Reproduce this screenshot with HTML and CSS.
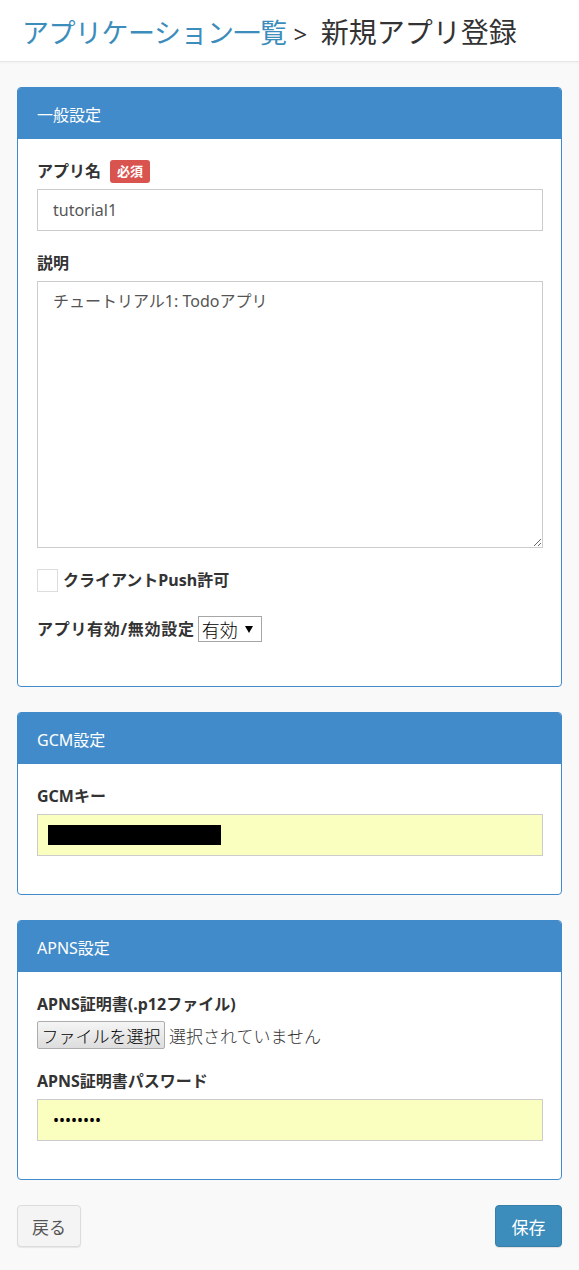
FILE: index.html
```html
<!DOCTYPE html>
<html lang="ja">
<head>
<meta charset="utf-8">
<title>新規アプリ登録</title>
<link rel="stylesheet" href="styles.css">
</head>
<body>
<header class="page-header">
  <h1 class="title"><a class="crumb" href="#">アプリケーション一覧</a><span class="sep">&gt;</span><span class="current">新規アプリ登録</span></h1>
</header>
<main class="content">
  <section class="panel">
    <div class="panel-heading">一般設定</div>
    <div class="panel-body">
      <div class="form-group">
        <label class="label">アプリ名 <span class="badge">必須</span></label>
        <input class="form-control" type="text" value="tutorial1">
      </div>
      <div class="form-group">
        <label class="label">説明</label>
        <textarea class="form-control textarea">チュートリアル1: Todoアプリ</textarea>
      </div>
      <div class="form-group check-row">
        <input class="checkbox" type="checkbox" id="push">
        <label class="label inline" for="push">クライアントPush許可</label>
      </div>
      <div class="form-group select-row last-general">
        <label class="label inline">アプリ有効/無効設定</label>
        <select class="select"><option>有効</option><option>無効</option></select>
      </div>
    </div>
  </section>

  <section class="panel">
    <div class="panel-heading">GCM設定</div>
    <div class="panel-body">
      <div class="form-group">
        <label class="label">GCMキー</label>
        <div class="field-wrap">
          <input class="form-control autofill" type="text" value="">
          <span class="redact"></span>
        </div>
      </div>
    </div>
  </section>

  <section class="panel">
    <div class="panel-heading">APNS設定</div>
    <div class="panel-body">
      <div class="form-group">
        <label class="label">APNS証明書(.p12ファイル)</label>
        <div class="file-row">
          <button class="file-btn" type="button">ファイルを選択</button>
          <span class="file-none">選択されていません</span>
        </div>
      </div>
      <div class="form-group">
        <label class="label">APNS証明書パスワード</label>
        <input class="form-control autofill" type="password" value="password">
      </div>
    </div>
  </section>

  <div class="actions">
    <button class="btn btn-default" type="button">戻る</button>
    <button class="btn btn-primary" type="button">保存</button>
  </div>
</main>
</body>
</html>
```

FILE: styles.css
```css
* { box-sizing: border-box; }

html, body {
  margin: 0;
  padding: 0;
}

body {
  background: #f9f9f9;
  font-family: "Noto Sans", "Noto Sans CJK JP", sans-serif;
  font-size: 16px;
  color: #333;
  width: 579px;
}

.page-header {
  height: 62px;
  background: #fff;
  border-bottom: 1px solid #e6e6e6;
  box-shadow: 0 1px 2px rgba(0,0,0,0.04);
  display: flex;
  align-items: center;
  padding-left: 22px;
}

.title {
  margin: 0;
  font-family: "Noto Sans", "Noto Sans CJK JP", sans-serif;
  font-size: 27px;
  font-weight: 400;
  color: #333;
  line-height: 1;
  letter-spacing: -0.5px;
  white-space: nowrap;
  padding-top: 2px;
}

.crumb {
  color: #3c8dbc;
  text-decoration: none;
}

.sep {
  font-size: 24px;
  margin: 0 14px 0 7px;
  color: #333;
}

.current {
  font-size: 28px;
  letter-spacing: 0;
}

.content {
  padding: 25px 17px 24px 17px;
}

.panel {
  background: #fff;
  border: 1px solid #428bca;
  border-radius: 4px;
  margin-bottom: 25px;
  overflow: hidden;
}

.panel-heading {
  background: #428bca;
  color: #fff;
  height: 51px;
  display: flex;
  align-items: center;
  padding: 0 19px;
  font-size: 16px;
}

.panel-body {
  padding: 20px 18px 18px 19px;
}

.form-group {
  margin-bottom: 20px;
}

.form-group.last-general {
  margin-bottom: 23px;
}

.label {
  display: flex;
  align-items: center;
  gap: 9px;
  font-weight: 700;
  font-size: 16px;
  line-height: 25px;
  height: 25px;
  margin-bottom: 5px;
  color: #333;
}

.label.inline {
  margin-bottom: 0;
  display: inline-flex;
}

.badge {
  display: inline-block;
  background: #d9534f;
  color: #fff;
  font-size: 13px;
  font-weight: 700;
  line-height: 23px;
  padding: 0 7px;
  border-radius: 3px;
}

.form-control {
  display: block;
  width: 100%;
  height: 42px;
  padding: 0 15px;
  border: 1px solid #ccc;
  border-radius: 0;
  background: #fff;
  font-family: "Noto Sans", "Noto Sans CJK JP", sans-serif;
  font-size: 16px;
  color: #555;
  outline: none;
}

.textarea {
  height: 267px;
  padding: 8px 15px;
  resize: vertical;
  line-height: 22px;
}

.autofill {
  background: #fafebe;
  color: #000;
}

.field-wrap {
  position: relative;
}

.redact {
  position: absolute;
  left: 11px;
  top: 11px;
  width: 173px;
  height: 20px;
  background: #000;
}

.check-row {
  display: flex;
  align-items: center;
  gap: 5px;
  height: 25px;
}

.checkbox {
  appearance: none;
  -webkit-appearance: none;
  margin: 0;
  width: 21px;
  height: 23px;
  border: 1px solid #ddd;
  background: #fff;
  border-radius: 0;
}

.select-row {
  display: flex;
  align-items: center;
  gap: 3px;
  height: 32px;
}

.select-row .label {
  letter-spacing: 0.7px;
}

.select {
  appearance: none;
  -webkit-appearance: none;
  width: 64px;
  height: 26px;
  border: 1px solid #a6a6a6;
  border-radius: 0;
  background: #fff url("data:image/svg+xml,%3Csvg xmlns='http://www.w3.org/2000/svg' width='8' height='7'%3E%3Cpath d='M0 0h8L4 7z' fill='%23000'/%3E%3C/svg%3E") no-repeat right 8px center;
  font-family: "Noto Sans CJK JP", sans-serif;
  font-size: 18px;
  font-weight: 300;
  color: #000;
  padding: 0 0 0 3px;
  line-height: 24px;
}

.file-row {
  display: flex;
  align-items: center;
  gap: 4px;
  margin-top: -1px;
}

.file-btn {
  width: 128px;
  height: 28px;
  padding: 0;
  border: 1px solid #adadad;
  border-radius: 2px;
  background: linear-gradient(#f5f5f5, #dddddd);
  font-family: "Noto Sans CJK JP", sans-serif;
  font-size: 17px;
  font-weight: 300;
  color: #000;
  white-space: nowrap;
}

.file-none {
  font-family: "Noto Sans CJK JP", sans-serif;
  font-size: 17px;
  font-weight: 300;
  color: #333;
}

.actions {
  display: flex;
  justify-content: space-between;
  align-items: center;
}

.btn {
  height: 42px;
  padding: 0;
  font-family: "Noto Sans", "Noto Sans CJK JP", sans-serif;
  font-size: 17px;
  border-radius: 4px;
  border: 1px solid;
  white-space: nowrap;
}

.btn-default {
  width: 64px;
  background: #f4f4f4;
  border-color: #dcdcdc;
  color: #555;
  box-shadow: 0 1px 1px rgba(0,0,0,0.08);
}

.btn-primary {
  width: 67px;
  background: #3c8dbc;
  border-color: #367fa9;
  color: #fff;
  box-shadow: 0 1px 1px rgba(0,0,0,0.1);
}
```
